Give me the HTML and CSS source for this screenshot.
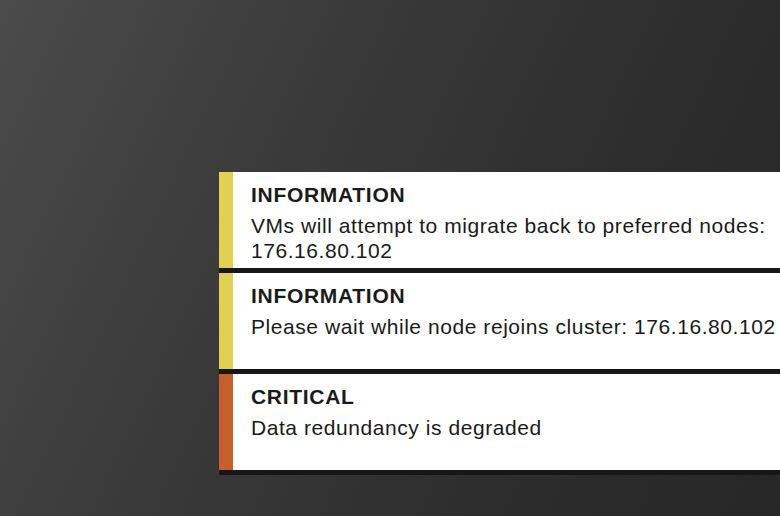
FILE: index.html
```html
<!DOCTYPE html>
<html lang="en">
<head>
  <meta charset="UTF-8">
  <meta name="viewport" content="width=device-width, initial-scale=1.0">
  <title>Alerts</title>
  <link rel="stylesheet" href="styles.css">
</head>
<body>
  <div class="alerts">
    <div class="alert info">
      <div class="stripe"></div>
      <div class="content">
        <h3>INFORMATION</h3>
        <p>VMs will attempt to migrate back to preferred nodes: 176.16.80.102</p>
      </div>
    </div>
    <div class="alert info">
      <div class="stripe"></div>
      <div class="content">
        <h3>INFORMATION</h3>
        <p>Please wait while node rejoins cluster: 176.16.80.102</p>
      </div>
    </div>
    <div class="alert critical">
      <div class="stripe"></div>
      <div class="content">
        <h3>CRITICAL</h3>
        <p>Data redundancy is degraded</p>
      </div>
    </div>
  </div>
</body>
</html>
```

FILE: styles.css
```css
html, body {
  height: 100%;
}
body {
  margin: 0;
  overflow: hidden;
  font-family: "Liberation Sans", Arial, sans-serif;
  color: #1a1a1a;
  background: linear-gradient(115deg, #4b4b4b 0%, #3a3a3a 35%, #2d2d2d 70%, #272727 100%);
}
.alerts {
  padding: 172px 0 0 219px;
  width: 620px;
}
.alert {
  display: flex;
  height: 96px;
  margin-bottom: 5px;
  background: #fff;
  box-shadow: 0 5px 0 #171717;
}
.stripe {
  width: 14px;
  flex-shrink: 0;
}
.info .stripe {
  background: #e0d152;
}
.critical .stripe {
  background: #c6602a;
}
.content {
  padding: 10px 0 0 18px;
}
h3 {
  margin: 0 0 6px;
  font-size: 21px;
  line-height: 25px;
  font-weight: bold;
  letter-spacing: 0.7px;
}
p {
  margin: 0;
  font-size: 21px;
  line-height: 25px;
  letter-spacing: 0.56px;
  width: 535px;
}
```
